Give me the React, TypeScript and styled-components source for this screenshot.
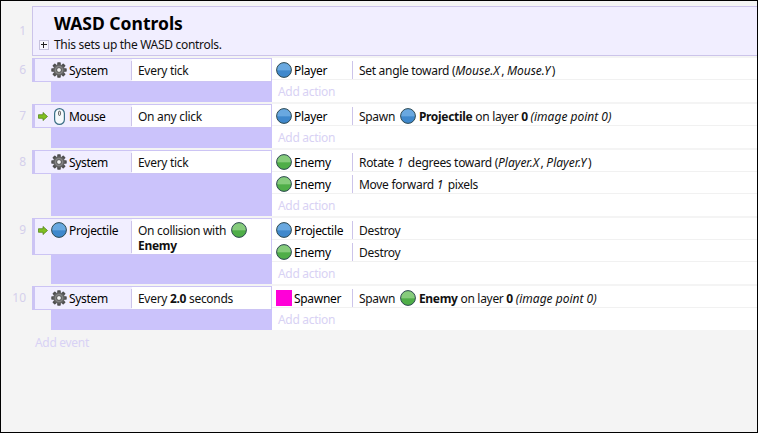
import React from 'react';
import styled, {createGlobalStyle} from 'styled-components';

const GlobalStyle = createGlobalStyle`
  html, body {
    margin: 0;
    padding: 0;
    background: #000;
  }
  body {
    font-family: "Noto Sans", "Open Sans", sans-serif;
    font-size: 12px;
    letter-spacing: -0.3px;
  }
  i {
    letter-spacing: 0;
    padding-right: 1.5px;
  }
`;

const Window = styled.div`
  box-sizing: border-box;
  width: 758px;
  height: 433px;
  border: 1px solid #000;
  background: #f4f4f4;
  padding-top: 5px;
  overflow: hidden;
`;

const Line = styled.div`
  display: flex;
  margin-bottom: 2px;
`;

const LineNumber = styled.div<{$group?: boolean}>`
  width: 25px;
  flex: none;
  text-align: right;
  color: #d4d0ec;
  line-height: ${p => (p.$group ? '50px' : '24px')};
  font-size: 12px;
  letter-spacing: 0;
  margin-right: 6px;
`;

const GroupBox = styled.div`
  box-sizing: border-box;
  flex: 1;
  height: 50px;
  background: #f1eeff;
  border: solid #ccc4ea;
  border-width: 1px 0 1px 1px;
  padding: 4px 0 0 21px;
`;

const GroupTitle = styled.div`
  font-size: 17.5px;
  font-weight: 700;
  line-height: 25px;
  letter-spacing: 0;
  color: #000;
`;

const GroupNote = styled.div`
  display: flex;
  align-items: center;
  margin: 1px 0 0 -15px;
  line-height: 16px;
  gap: 5px;
  color: #111;
`;

const PlusBox = styled.span`
  box-sizing: border-box;
  position: relative;
  width: 10px;
  height: 10px;
  border: 1px solid #c6c2dc;
  background: #f8f7ff;
  &::before, &::after {
    content: '';
    position: absolute;
    background: #222;
  }
  &::before { left: 1px; right: 1px; top: 3px; height: 1px; }
  &::after { top: 1px; bottom: 1px; left: 3px; width: 1px; }
`;

const EventBody = styled.div`
  flex: 1;
  display: flex;
`;

const ConditionColumn = styled.div`
  width: 240px;
  flex: none;
  display: flex;
  flex-direction: column;
`;

const ConditionRow = styled.div`
  box-sizing: border-box;
  display: flex;
  border: solid #ccc4f4;
  border-width: 1px 1px 1px 3px;
  background: #fff;
`;

const ObjectCell = styled.div`
  box-sizing: border-box;
  position: relative;
  width: 97px;
  flex: none;
  display: flex;
  align-items: flex-start;
  background: #f1eeff;
  padding: 2px 0 0 3px;

  &::after {
    content: '';
    position: absolute;
    right: 0;
    top: 2px;
    bottom: 1px;
    width: 1px;
    background: #ccc4ea;
  }
`;

const CellLabel = styled.span`
  line-height: 20px;
  margin-left: 2px;
  white-space: nowrap;
`;

const ArrowSlot = styled.span`
  width: 13px;
  height: 18px;
  flex: none;
  display: flex;
  align-items: center;
`;

const IconSlot = styled.span`
  width: 16px;
  height: 18px;
  flex: none;
  display: flex;
  align-items: center;
  justify-content: center;
`;

const ConditionText = styled.div`
  box-sizing: border-box;
  flex: 1;
  min-height: 21px;
  padding: 4px 6px 1px;
  line-height: 15px;
  color: #111;
`;

const Filler = styled.div`
  flex: 1;
  margin-left: 19px;
  background: #cbc3fb;
`;

const ActionColumn = styled.div`
  flex: 1;
  display: flex;
  flex-direction: column;
`;

const ActionRow = styled.div`
  box-sizing: border-box;
  height: 22px;
  display: flex;
  padding-top: 3px;
  background: #fff;
  border-bottom: 1px solid #f1f1f1;
`;

const ActionObject = styled.div`
  box-sizing: border-box;
  width: 81px;
  flex: none;
  display: flex;
  height: 18px;
  padding-left: 4px;
  border-right: 1px solid #ccc4ea;
`;

const ActionText = styled.div`
  padding-left: 6px;
  line-height: 20px;
  white-space: pre;
  color: #111;
`;

const AddLink = styled.div<{$event?: boolean}>`
  color: #d8d2f4;
  line-height: ${p => (p.$event ? '22px' : '24px')};
  height: 22px;
  padding-left: ${p => (p.$event ? '34px' : '6px')};
  margin-top: ${p => (p.$event ? '1px' : '0')};
  background: ${p => (p.$event ? 'transparent' : '#fff')};
`;

const InlineSphere = styled.span`
  display: inline-flex;
  align-items: center;
  height: 12px;
  margin: 0 3px 0 2px;
  vertical-align: -3px;
`;

const SwatchIcon = styled.span`
  width: 16px;
  height: 16px;
  background: #ff00d8;
`;

function Sphere({color}: {color: 'blue' | 'green'}) {
    const top = color === 'blue' ? '#69a8e0' : '#86cc7c';
    const bottom = color === 'blue' ? '#3f88cc' : '#4fae48';
    const gid = `sphere-${color}`;
    return (
        <svg width="16" height="16" viewBox="0 0 16 16" style={{flex: 'none'}}>
            <defs>
                <linearGradient id={gid} x1="0" y1="0" x2="0" y2="1">
                    <stop offset="0" stopColor={top}/>
                    <stop offset="0.5" stopColor={top}/>
                    <stop offset="0.55" stopColor={bottom}/>
                    <stop offset="1" stopColor={bottom}/>
                </linearGradient>
            </defs>
            <circle cx="8" cy="8" r="7.4" fill={`url(#${gid})`} stroke="#2f4a52" strokeWidth="1"/>
        </svg>
    );
}

function Gear() {
    const teeth = [0, 45, 90, 135, 180, 225, 270, 315];
    return (
        <svg width="16" height="16" viewBox="0 0 18 18">
            {teeth.map(a => (
                <rect key={a} x="7" y="0.3" width="4" height="4" rx="0.8" fill="#4f4f4f" transform={`rotate(${a} 9 9)`}/>
            ))}
            <circle cx="9" cy="9" r="6.5" fill="#636363"/>
            <circle cx="9" cy="9" r="4.8" fill="#848484"/>
            <circle cx="9" cy="9" r="2.7" fill="#f4f4f4" stroke="#3c3c3c" strokeWidth="0.9"/>
        </svg>
    );
}

function MouseIcon() {
    return (
        <svg width="11" height="17" viewBox="0 0 11 17">
            <rect x="0.6" y="0.6" width="9.8" height="15.8" rx="4.9" fill="#f6fafc" stroke="#3b6f86" strokeWidth="1.2"/>
            <rect x="4.6" y="3.2" width="1.8" height="4.2" rx="0.9" fill="#fff" stroke="#333" strokeWidth="0.8"/>
        </svg>
    );
}

function TriggerArrow() {
    return (
        <svg width="10" height="9" viewBox="0 0 11 10">
            <path d="M0.5 3 H5.5 V0.5 L10.5 5 L5.5 9.5 V7 H0.5 Z" fill="#7fbf22" stroke="#4d7f10" strokeWidth="0.8"/>
        </svg>
    );
}

const objectIcons = {
    blue: <Sphere color="blue"/>,
    green: <Sphere color="green"/>,
    spawner: <SwatchIcon/>,
};

interface Action {
    readonly icon: keyof typeof objectIcons;
    readonly object: string;
    readonly text: React.ReactNode;
}

interface EventLine {
    readonly line: number;
    readonly arrow?: boolean;
    readonly icon: React.ReactNode;
    readonly object: string;
    readonly condition: React.ReactNode;
    readonly actions: Action[];
}

const events: EventLine[] = [
    {
        line: 6, icon: <Gear/>, object: 'System', condition: 'Every tick',
        actions: [{icon: 'blue', object: 'Player', text: <>Set angle toward (<i>Mouse.X</i>, <i>Mouse.Y</i>)</>}],
    },
    {
        line: 7, arrow: true, icon: <MouseIcon/>, object: 'Mouse', condition: 'On any click',
        actions: [{
            icon: 'blue', object: 'Player',
            text: <>Spawn <InlineSphere><Sphere color="blue"/></InlineSphere><b>Projectile</b> on layer <b>0</b> <i>(image point 0)</i></>,
        }],
    },
    {
        line: 8, icon: <Gear/>, object: 'System', condition: 'Every tick',
        actions: [
            {icon: 'green', object: 'Enemy', text: <>Rotate <i>1</i> degrees toward (<i>Player.X</i>, <i>Player.Y</i>)</>},
            {icon: 'green', object: 'Enemy', text: <>Move forward <i>1</i> pixels</>},
        ],
    },
    {
        line: 9, arrow: true, icon: <Sphere color="blue"/>, object: 'Projectile',
        condition: <>On collision with <InlineSphere><Sphere color="green"/></InlineSphere><br/><b>Enemy</b></>,
        actions: [
            {icon: 'blue', object: 'Projectile', text: 'Destroy'},
            {icon: 'green', object: 'Enemy', text: 'Destroy'},
        ],
    },
    {
        line: 10, icon: <Gear/>, object: 'System', condition: <>Every <b>2.0</b> seconds</>,
        actions: [{
            icon: 'spawner', object: 'Spawner',
            text: <>Spawn <InlineSphere><Sphere color="green"/></InlineSphere><b>Enemy</b> on layer <b>0</b> <i>(image point 0)</i></>,
        }],
    },
];

export default function App() {
    return (
        <Window>
            <GlobalStyle/>
            <Line>
                <LineNumber $group>1</LineNumber>
                <GroupBox>
                    <GroupTitle>WASD Controls</GroupTitle>
                    <GroupNote><PlusBox/>This sets up the WASD controls.</GroupNote>
                </GroupBox>
            </Line>
            {events.map(ev => (
                <Line key={ev.line}>
                    <LineNumber>{ev.line}</LineNumber>
                    <EventBody>
                        <ConditionColumn>
                            <ConditionRow>
                                <ObjectCell>
                                    <ArrowSlot>{ev.arrow && <TriggerArrow/>}</ArrowSlot>
                                    <IconSlot>{ev.icon}</IconSlot>
                                    <CellLabel>{ev.object}</CellLabel>
                                </ObjectCell>
                                <ConditionText>{ev.condition}</ConditionText>
                            </ConditionRow>
                            <Filler/>
                        </ConditionColumn>
                        <ActionColumn>
                            {ev.actions.map((a, i) => (
                                <ActionRow key={i}>
                                    <ActionObject>
                                        <IconSlot>{objectIcons[a.icon]}</IconSlot>
                                        <CellLabel>{a.object}</CellLabel>
                                    </ActionObject>
                                    <ActionText>{a.text}</ActionText>
                                </ActionRow>
                            ))}
                            <AddLink>Add action</AddLink>
                        </ActionColumn>
                    </EventBody>
                </Line>
            ))}
            <AddLink $event>Add event</AddLink>
        </Window>
    );
}
